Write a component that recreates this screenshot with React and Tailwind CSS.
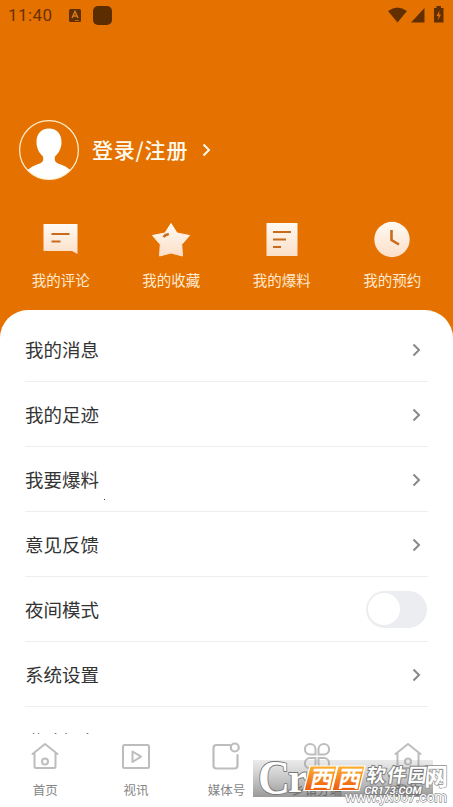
import React, { useState } from "react";

const shortcuts = [
  { label: "我的评论", icon: CommentIcon },
  { label: "我的收藏", icon: StarIcon },
  { label: "我的爆料", icon: NoteIcon },
  { label: "我的预约", icon: ClockIcon },
];

const menu = ["我的消息", "我的足迹", "我要爆料", "意见反馈", "夜间模式", "系统设置", "邀请好友"];

const tabs = [
  { label: "首页", icon: HomeIcon },
  { label: "视讯", icon: VideoIcon },
  { label: "媒体号", icon: MediaIcon },
  { label: "乡镇分端", icon: CloverIcon, dark: true },
  { label: "我的", icon: HomeIcon, dark: true },
];

function Fade({ id }) {
  return (
    <linearGradient id={id} x1="0" y1="0" x2="0" y2="1">
      <stop offset="0" stopColor="#fffaf3" />
      <stop offset="1" stopColor="#fbdfc8" />
    </linearGradient>
  );
}

function CommentIcon() {
  return (
    <svg className="size-10" viewBox="0 0 40 40">
      <Fade id="f1" />
      <path d="M2.500 4H36.500V34L31 31H2.500Z" fill="url(#f1)" />
      <path d="M10.500 14H28.500M10.500 21.500H19.500" stroke="#c96a1c" strokeWidth="2.200" />
    </svg>
  );
}

function StarIcon() {
  return (
    <svg className="size-10" viewBox="0 0 40 40">
      <Fade id="f2" />
      <path
        d="M20 3.500L26 13L38.500 15.500L30.700 24.500L31.500 36L20 33L8.500 36L9.300 24.500L1.500 15.500L14 13Z"
        fill="url(#f2)"
        stroke="url(#f2)"
        strokeLinejoin="round"
      />
      <path d="M12.500 17Q14 14.800 17.800 14" fill="none" stroke="#c96a1c" strokeWidth="2.600" />
    </svg>
  );
}

function NoteIcon() {
  return (
    <svg className="size-10" viewBox="0 0 40 40">
      <Fade id="f3" />
      <rect x="4.500" y="3" width="31" height="33" fill="url(#f3)" />
      <path d="M11 12H29M11 19.500H24M11 27H19" stroke="#c96a1c" strokeWidth="2.200" />
    </svg>
  );
}

function ClockIcon() {
  return (
    <svg className="size-10" viewBox="0 0 40 40">
      <Fade id="f4" />
      <circle cx="20" cy="19.500" r="17.700" fill="url(#f4)" />
      <path d="M19.500 10V20L27 24.500" fill="none" stroke="#c96a1c" strokeWidth="2.600" />
    </svg>
  );
}

function HomeIcon() {
  return (
    <svg className="size-8" viewBox="0 0 32 32" fill="none" stroke="#bdbdbd" strokeWidth="2">
      <path d="M3.500 14L16 4L28.500 14M5.500 12.500V26.500Q5.500 28 7 28H25Q26.500 28 26.500 26.500V12.500" strokeLinecap="round" strokeLinejoin="round" />
      <circle cx="16" cy="21.500" r="3" />
    </svg>
  );
}

function VideoIcon() {
  return (
    <svg className="size-8" viewBox="0 0 32 32" fill="none" stroke="#bdbdbd" strokeWidth="2" strokeLinejoin="round">
      <rect x="3" y="5" width="26" height="23" rx="1.500" />
      <path d="M12.500 11.500V22L21 16.700Z" />
    </svg>
  );
}

function MediaIcon() {
  return (
    <svg className="size-8" viewBox="0 0 32 32" fill="none" stroke="#bdbdbd" strokeWidth="2.200" strokeLinecap="round">
      <path d="M20 5H6.500Q3.500 5 3.500 8V25.500Q3.500 28.500 6.500 28.500H24.500Q27.500 28.500 27.500 25.500V15" />
      <circle cx="24.800" cy="7.500" r="4" />
    </svg>
  );
}

function CloverIcon() {
  return (
    <svg className="size-8" viewBox="0 0 32 32" fill="none" stroke="#bdbdbd" strokeWidth="2">
      <path d="M14.500 14.500H9A5.300 5.300 0 1 1 14.500 9ZM17.500 14.500V9A5.300 5.300 0 1 1 23 14.500ZM14.500 18V23.500A5.300 5.300 0 1 1 9 18ZM17.500 18H23A5.300 5.300 0 1 1 17.500 23.500Z" />
    </svg>
  );
}

function Chevron({ className }) {
  return (
    <svg className={className} viewBox="0 0 14 14" fill="none" stroke="currentColor" strokeWidth="2">
      <path d="M4.500 1.500L10 7L4.500 12.500" />
    </svg>
  );
}

function StatusBar() {
  return (
    <div className="flex h-8 items-center pl-2 pr-2 text-[#6b3200]">
      <span className="w-[61px] font-[Roboto] text-[17px] tracking-[0.4px]">11:40</span>
      <svg className="mb-0.5 h-[13px] w-3" viewBox="0 0 12 13">
        <rect width="12" height="13" rx="1.500" fill="#623000" />
        <path d="M3 9L6 2.500L9 9M4 7H8" fill="none" stroke="#d97a20" strokeWidth="1.400" />
        <path d="M6 11.500H10" stroke="#b96010" />
      </svg>
      <span className="mb-0.5 ml-3 size-[19px] rounded-[5px] bg-[#5c2d00]" />
      <svg className="mb-0.5 ml-auto h-[18px] w-[58px]" viewBox="0 0 58 18" fill="#623000">
        <path d="M1 5Q10.500-2 20 5L10.500 16.500Z" />
        <path d="M24 16.500L37.500 2V16.500Z" />
        <path d="M49.500 0H54V2H56.500V16.500H47V2H49.500Z" />
        <path d="M52.500 4.500L49.500 10H51.500L51 14L54 8.500H52Z" fill="#e57200" />
      </svg>
    </div>
  );
}

function Watermark() {
  return (
    <svg className="absolute left-[252px] top-[754px] h-[53px] w-[201px]" viewBox="0 0 201 53">
      <defs>
        <linearGradient id="shade" x1="0" y1="0" x2="0" y2="1">
          <stop offset="0" stopColor="#9a9a9a" stopOpacity="0.200" />
          <stop offset="1" stopColor="#777" stopOpacity="0.750" />
        </linearGradient>
        <linearGradient id="orange" x1="0" y1="0" x2="0" y2="1">
          <stop offset="0" stopColor="#ffb02e" />
          <stop offset="1" stopColor="#ee5a0c" />
        </linearGradient>
      </defs>
      <rect x="1" y="6" width="180" height="37" fill="url(#shade)" />
      <g fontFamily="Roboto, 'Noto Sans CJK SC', sans-serif" fill="#fff" stroke="#8f8f8f" strokeWidth="1.300" paintOrder="stroke">
        <text x="172" y="31" fontSize="24" fontWeight="bold">网</text>
        <text x="93" y="47.500" fontSize="14.500" textLength="102">www.yx007.com</text>
      </g>
      <g fontFamily="'Liberation Serif', serif" fontWeight="bold" fill="#fff" stroke="#777" strokeWidth="1.800" paintOrder="stroke" strokeLinejoin="round">
        <text x="6" y="39.500" fontSize="49" textLength="32" lengthAdjust="spacingAndGlyphs">C</text>
        <text x="36" y="38" fontSize="42" textLength="19" lengthAdjust="spacingAndGlyphs">r</text>
      </g>
      <path d="M58 12H85L79 36.500H52ZM86 12H113L107 36.500H80Z" fill="url(#orange)" stroke="#fff" strokeWidth="1.200" />
      <g fontFamily="'Noto Sans CJK SC', sans-serif" fontWeight="bold" fill="#fff">
        <text fontSize="23" transform="translate(57 32.500) skewX(-12)">西</text>
        <text fontSize="23" transform="translate(85 32.500) skewX(-12)">西</text>
        <g stroke="#777" strokeWidth="1.800" paintOrder="stroke">
          <text fontSize="19" textLength="60" transform="translate(114 28) skewX(-8)">软件园</text>
          <text fontFamily="Roboto, sans-serif" fontSize="10.500" textLength="57" lengthAdjust="spacingAndGlyphs" transform="translate(112 39.500) skewX(-10)">CR173.COM</text>
        </g>
      </g>
    </svg>
  );
}

export default function App() {
  const [night, setNight] = useState(false);

  return (
    <div className="relative flex h-[807px] w-[453px] flex-col overflow-hidden bg-[#e57200] font-['Noto_Sans_CJK_SC',sans-serif]">
      <StatusBar />

      <div className="mt-[87px] flex h-[61px] items-center pl-[19px] text-[#fffaf0]">
        <svg className="size-[60px]" viewBox="0 0 60 60">
          <clipPath id="face">
            <circle cx="30" cy="30" r="29.500" />
          </clipPath>
          <path
            d="M30 8.500C22 8.500 17.500 14 17.500 22C17.500 28 20 33 24 36.500C25 42 23 43 17 45C12 47 9 49 5 54V62H55V54C51 49 48 47 43 45C37 43 35 42 36 36.500C40 33 42.500 28 42.500 22C42.500 14 38 8.500 30 8.500Z"
            fill="#fff"
            clipPath="url(#face)"
          />
          <circle cx="30" cy="30" r="29.400" fill="none" stroke="#fff0cf" strokeWidth="1.200" />
        </svg>
        <span className="ml-[13px] w-[97px] whitespace-nowrap text-[21px] leading-none font-medium tracking-[0.8px]">登录/注册</span>
        <Chevron className="ml-2.5 size-3.5" />
      </div>

      <div className="mt-[40px] flex h-[90px] px-[5.500px]">
        {shortcuts.map(({ label, icon: Icon }) => (
          <div key={label} className="flex flex-1 flex-col items-center">
            <Icon />
            <span className="mt-[13px] text-[14.500px] leading-[14px] text-[#ffe9cf]">{label}</span>
          </div>
        ))}
      </div>

      <div className="h-[424px] overflow-hidden rounded-t-[28px] bg-white px-[25px] pt-[7px]">
        {menu.map(label => (
          <div key={label} className="flex h-[65px] items-center justify-between border-b border-[#eeeeee] pt-px last:pt-[5px]">
            <span className="text-[18.500px] leading-none text-[#333]">{label}</span>
            {label === "夜间模式" && (
              <button
                onClick={() => setNight(!night)}
                className={"mr-px mb-px flex h-[37px] w-[61px] items-center rounded-full bg-[#ecedf0] p-0.5 " + (night ? "justify-end" : "")}
              >
                <span className="size-[32px] rounded-full bg-white" />
              </button>
            )}
            {label !== "夜间模式" && label !== "邀请好友" && <Chevron className="mr-[5px] size-3.5 text-[#888]" />}
          </div>
        ))}
      </div>
      <span className="absolute left-[104px] top-[499px] size-px bg-[#333]" />

      <div className="flex h-[73px] bg-white pt-[6px]">
        {tabs.map(({ label, icon: Icon, dark }) => (
          <div key={label} className="flex flex-1 flex-col items-center">
            <Icon />
            <span className={"mt-3 text-[12.500px] leading-3 " + (dark ? "text-[#333]" : "text-[#858585]")}>{label}</span>
          </div>
        ))}
      </div>

      <Watermark />
    </div>
  );
}
